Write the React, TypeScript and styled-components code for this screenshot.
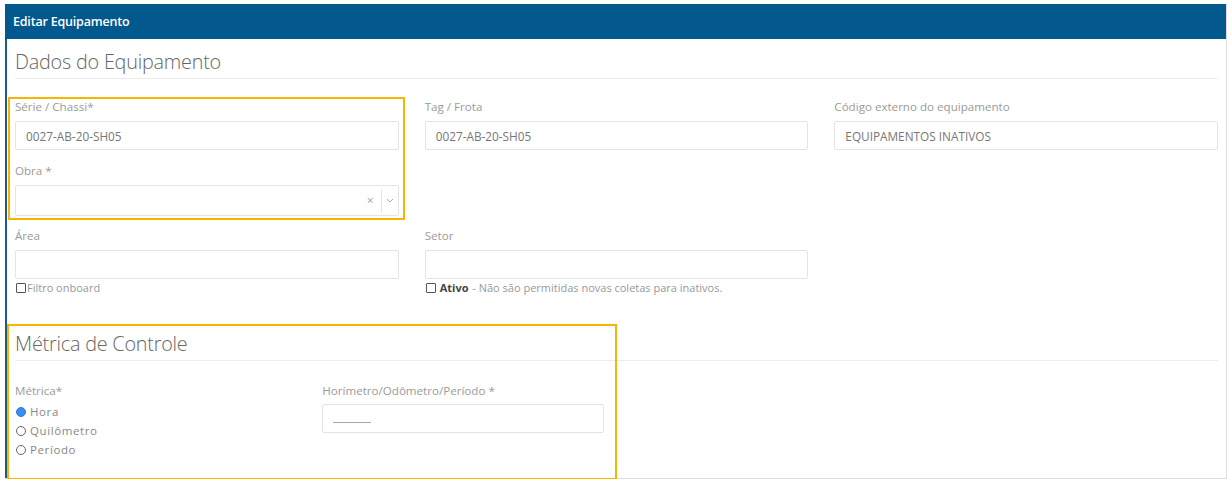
import React, { FunctionComponent, ReactNode } from "react";
import styled, { createGlobalStyle } from "styled-components";

const GlobalStyle = createGlobalStyle`
  html, body {
    margin: 0;
    padding: 0;
    background: #ffffff;
    font-family: 'Open Sans', 'Liberation Sans', sans-serif;
  }
`;

const Page = styled.div`
  padding: 4px 5px 0 5px;
`;

const Panel = styled.div`
  width: 1222px;
  box-sizing: border-box;
  border-right: 1px solid #dedede;
  border-bottom: 1px solid #dedede;
`;

const PanelHeader = styled.div`
  height: 35px;
  box-sizing: border-box;
  background: #03598d;
  color: #ffffff;
  font-size: 12.5px;
  font-weight: 600;
  line-height: 35px;
  padding-left: 8px;
  letter-spacing: -0.2px;
`;

const PanelBody = styled.div`
  border-left: 2px solid #1b5b86;
  padding: 11px 8px 19px 8px;
`;

const Section = styled.div`
  position: relative;
`;

const SectionTitle = styled.h3`
  margin: 0;
  font-size: 19.8px;
  font-weight: 300;
  line-height: 24px;
  color: #666666;
  padding-bottom: 4px;
  border-bottom: 1px solid #ececec;
  letter-spacing: -0.2px;
`;

const Grid = styled.div<{ $cols: number; $top: number }>`
  display: grid;
  grid-template-columns: repeat(${(p) => p.$cols}, 1fr);
  column-gap: 26px;
  align-items: start;
  margin-top: ${(p) => p.$top}px;
`;

const Column = styled.div`
  display: flex;
  flex-direction: column;
`;

const Field = styled.div<{ $gap?: number }>`
  display: flex;
  flex-direction: column;
  margin-bottom: ${(p) => p.$gap ?? 0}px;
`;

const Label = styled.label`
  font-size: 11.6px;
  line-height: 16px;
  color: #9a9a9a;
  margin-bottom: 6px;
`;

const Input = styled.div`
  height: 29px;
  box-sizing: border-box;
  border: 1px solid #e4e4e4;
  border-radius: 2px;
  padding: 0 10px;
  display: flex;
  align-items: center;
  font-size: 11.8px;
  color: #777777;
`;

const SelectBox = styled(Input)`
  height: 31px;
  padding-right: 0;
  justify-content: flex-end;
`;

const ClearMark = styled.span`
  color: #a0a0a0;
  font-size: 12px;
  padding-right: 7px;
`;

const SelectDivider = styled.span`
  width: 1px;
  height: 23px;
  background: #e4e4e4;
`;

const Chevron = styled.span`
  width: 16px;
  display: flex;
  justify-content: center;
`;

const Placeholder = styled.span`
  width: 38px;
  height: 1px;
  background: #a8a8a8;
  margin-top: 8px;
`;

const CheckRow = styled.div`
  display: flex;
  align-items: center;
  gap: 1px;
  margin-top: 2px;
  font-size: 11px;
  line-height: 14px;
  color: #999999;
`;

const CheckBox = styled.span`
  width: 8px;
  height: 8px;
  border: 1px solid #555;
  border-radius: 1px;
  margin-left: 1px;
`;

const Strong = styled.b`
  color: #444444;
  font-weight: 700;
  margin-left: 3px;
`;

const Radio = styled.div`
  display: flex;
  align-items: center;
  gap: 4px;
  font-size: 11.5px;
  line-height: 19px;
  color: #888888;
  letter-spacing: 0.6px;
`;

const RadioDot = styled.span<{ $checked?: boolean }>`
  width: 8px;
  height: 8px;
  border-radius: 50%;
  margin-left: 1px;
  border: 1px solid ${(p) => (p.$checked ? "#2c7be5" : "#666")};
  background: ${(p) => (p.$checked ? "#3b8ced" : "#fff")};
`;

const RadioList = styled.div`
  display: flex;
  flex-direction: column;
  margin-top: -3px;
`;

const Highlight = styled.div`
  position: relative;

  &::after {
    content: "";
    position: absolute;
    pointer-events: none;
    top: -2px;
    left: -7px;
    right: -6px;
    bottom: -4px;
    border: 2px solid #f6b500;
  }
`;

const SectionHighlight = styled.span`
  position: absolute;
  pointer-events: none;
  top: -8px;
  left: -8px;
  width: 610px;
  bottom: -21px;
  border: 2px solid #f6b500;
  box-sizing: border-box;
`;

const TextField: FunctionComponent<{ label: string; value?: string; gap?: number }> = ({
  label,
  value,
  gap,
}) => (
  <Field $gap={gap}>
    <Label>{label}</Label>
    <Input>{value}</Input>
  </Field>
);

const Check: FunctionComponent<{ children: ReactNode }> = ({ children }) => (
  <CheckRow>
    <CheckBox />
    {children}
  </CheckRow>
);

const App: FunctionComponent = () => {
  return (
    <>
      <GlobalStyle />
      <Page>
        <Panel>
          <PanelHeader>Editar Equipamento</PanelHeader>
          <PanelBody>
            <Section>
              <SectionTitle>Dados do Equipamento</SectionTitle>
              <Grid $cols={3} $top={20}>
                <Column>
                  <Highlight>
                    <TextField label="Série / Chassi*" value="0027-AB-20-SH05" gap={13} />
                    <Field>
                      <Label>Obra *</Label>
                      <SelectBox>
                        <ClearMark>×</ClearMark>
                        <SelectDivider />
                        <Chevron>
                          <svg width="8" height="5" viewBox="0 0 8 5">
                            <path d="M1 1l3 3 3-3" fill="none" stroke="#aaa" strokeWidth="1" />
                          </svg>
                        </Chevron>
                      </SelectBox>
                    </Field>
                  </Highlight>
                  <Field style={{ marginTop: 12 }}>
                    <Label>Área</Label>
                    <Input />
                  </Field>
                  <Check>Filtro onboard</Check>
                </Column>
                <Column>
                  <TextField label="Tag / Frota" value="0027-AB-20-SH05" gap={78} />
                  <TextField label="Setor" />
                  <Check>
                    <Strong>Ativo</Strong>&nbsp;- Não são permitidas novas coletas para inativos.
                  </Check>
                </Column>
                <Column>
                  <TextField label="Código externo do equipamento" value="EQUIPAMENTOS INATIVOS" />
                </Column>
              </Grid>
            </Section>

            <Section style={{ marginTop: 37 }}>
              <SectionHighlight />
              <SectionTitle>Métrica de Controle</SectionTitle>
              <Grid $cols={4} $top={22}>
                <Column>
                  <Label>Métrica*</Label>
                  <RadioList>
                    <Radio>
                      <RadioDot $checked />
                      Hora
                    </Radio>
                    <Radio>
                      <RadioDot />
                      Quilômetro
                    </Radio>
                    <Radio>
                      <RadioDot />
                      Período
                    </Radio>
                  </RadioList>
                </Column>
                <Column>
                  <Field>
                    <Label style={{ marginBottom: 5 }}>Horímetro/Odômetro/Período *</Label>
                    <Input>
                      <Placeholder />
                    </Input>
                  </Field>
                </Column>
              </Grid>
            </Section>
          </PanelBody>
        </Panel>
      </Page>
    </>
  );
};

export default App;
